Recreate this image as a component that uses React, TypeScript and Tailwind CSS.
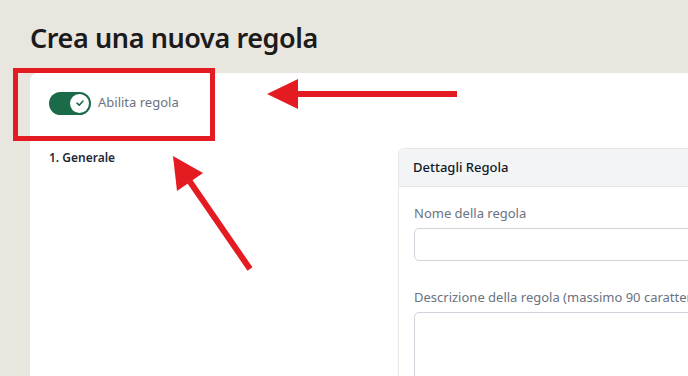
import React from "react";

export default function App() {
  return (
    <div
      className="relative w-[688px] h-[376px] overflow-hidden bg-[#e9e6e0]"
      style={{ fontFamily: '"Noto Sans", "Open Sans", sans-serif' }}
    >
      <div className="pl-[30px] pt-[20px] h-[73px]">
        <h1 className="text-[27px] leading-[36px] font-semibold text-[#1b1b1b] tracking-[-0.4px]">
          Crea una nuova regola
        </h1>
      </div>
      <div className="ml-[30px] bg-white rounded-tl-[8px] h-[303px] pl-[19px] pt-[18px]">
        <div className="flex items-center gap-[7px] h-[24px]">
          <div className="w-[42px] h-[23px] rounded-full bg-[#1b6b49] flex items-center justify-end pr-[2px]">
            <div className="w-[19px] h-[19px] rounded-full bg-white flex items-center justify-center">
              <svg width="10" height="10" viewBox="0 0 10 10">
                <path d="M2 5.2 L4.2 7.2 L8 3" fill="none" stroke="#1b6b49" strokeWidth="1.6" strokeLinecap="round" strokeLinejoin="round" />
              </svg>
            </div>
          </div>
          <span className="text-[13px] text-[#6b7280]">Abilita regola</span>
        </div>
        <div className="flex items-start mt-[33px]">
          <div className="w-[349px] shrink-0 text-[12px] font-semibold text-[#1f2937] leading-[18px] pt-[1px]">
            1. Generale
          </div>
          <div className="flex-1 min-w-0 border border-[#e5e7eb] rounded-tl-[6px] h-[240px] -mr-[4px]">
            <div className="h-[38px] bg-[#f3f4f6] border-b border-[#e5e7eb] flex items-center pl-[14px] text-[13px] font-medium text-[#111827] rounded-tl-[6px]">
              Dettagli Regola
            </div>
            <div className="pl-[15px] pt-[17px]">
              <div className="text-[13px] text-[#6b7280] leading-[18px]">Nome della regola</div>
              <div className="mt-[6px] h-[33px] border border-[#d1d5db] rounded-[5px] w-[300px]"></div>
              <div className="mt-[27px] text-[13px] text-[#6b7280] leading-[18px] whitespace-nowrap">
                Descrizione della regola (massimo 90 caratteri)
              </div>
              <div className="mt-[6px] h-[80px] border border-[#d1d5db] rounded-[5px] w-[300px]"></div>
            </div>
          </div>
        </div>
      </div>

      <div className="absolute left-[13px] top-[68px] w-[202px] h-[73px] border-[5px] border-[#e41c22]"></div>

      <svg className="absolute left-0 top-0" width="688" height="376" viewBox="0 0 688 376">
        <line x1="457" y1="94" x2="292" y2="94" stroke="#e41c22" strokeWidth="6" />
        <polygon points="267,94 298,79 298,109" fill="#e41c22" />
        <line x1="250" y1="269" x2="186" y2="176" stroke="#e41c22" strokeWidth="6" />
        <polygon points="173,156 177,191 203,173" fill="#e41c22" />
      </svg>
    </div>
  );
}
